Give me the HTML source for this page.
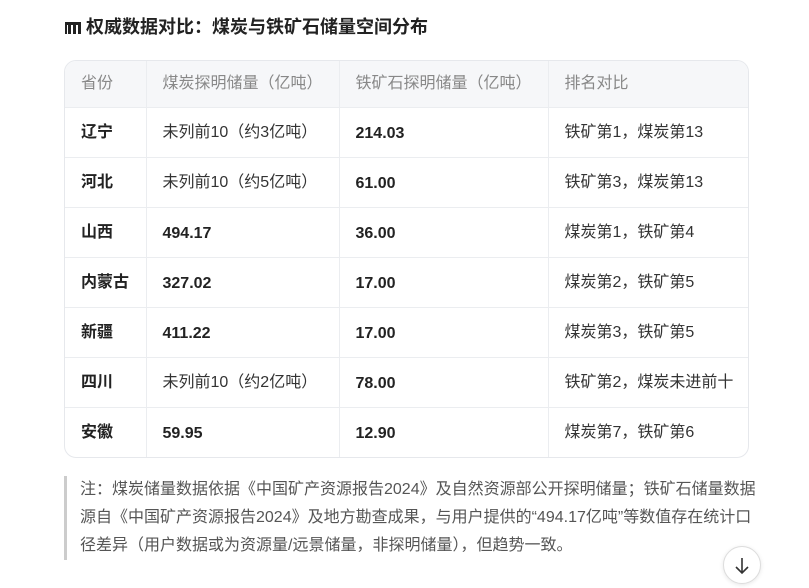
<!DOCTYPE html>
<html><head><meta charset="utf-8"><style>
body{margin:0;background:#fff;font-family:"Liberation Sans","Noto Sans CJK SC",sans-serif;color:#222;width:809px;height:574px;overflow:hidden;position:relative}
h3{position:absolute;left:64px;top:13px;margin:0;font-size:18px;font-weight:bold;color:#222;line-height:28px;display:flex;align-items:center}
.tbl{position:absolute;left:64px;top:60px;width:683px;border:1px solid #e6e8ec;border-radius:12px;overflow:hidden}
table{border-collapse:collapse;width:100%;font-size:16px;table-layout:fixed}
td,th{border-right:1px solid #ebedf0;border-bottom:1px solid #ebedf0;padding:0 0 0 16px;text-align:left;height:49px;white-space:nowrap;line-height:22px}
th{background:#f6f7f9;font-weight:normal;color:#888;height:46px}
tr:last-child td{border-bottom:none}
td:last-child,th:last-child{border-right:none}
td.b{font-weight:bold;color:#222}
td.n{padding-top:3px;height:46px}
td{color:#333}
.note{position:absolute;left:64px;top:476px;width:690px;border-left:3px solid #ccc;padding-left:13px;font-size:16px;line-height:28px;color:#555;white-space:nowrap}
.btn{position:absolute;left:723px;top:546px;width:36px;height:36px;border:1px solid #ddd;border-radius:50%;background:#fff;box-shadow:0 1px 4px rgba(0,0,0,.1)}
</style></head><body>
<h3><svg width="18" height="16" viewBox="0 0 18 16" style="margin-right:4px"><path d="M1 3h16v12h-3V6h-2v9H9V6H7v9H4V6H3v9H1z" fill="#222"/></svg>权威数据对比：煤炭与铁矿石储量空间分布</h3>
<div class="tbl"><table>
<colgroup><col style="width:81px"><col style="width:193px"><col style="width:209px"><col></colgroup>
<tr><th>省份</th><th>煤炭探明储量（亿吨）</th><th>铁矿石探明储量（亿吨）</th><th>排名对比</th></tr>
<tr><td class="b">辽宁</td><td>未列前10（约3亿吨）</td><td class="b n">214.03</td><td>铁矿第1，煤炭第13</td></tr>
<tr><td class="b">河北</td><td>未列前10（约5亿吨）</td><td class="b n">61.00</td><td>铁矿第3，煤炭第13</td></tr>
<tr><td class="b">山西</td><td class="b n">494.17</td><td class="b n">36.00</td><td>煤炭第1，铁矿第4</td></tr>
<tr><td class="b">内蒙古</td><td class="b n">327.02</td><td class="b n">17.00</td><td>煤炭第2，铁矿第5</td></tr>
<tr><td class="b">新疆</td><td class="b n">411.22</td><td class="b n">17.00</td><td>煤炭第3，铁矿第5</td></tr>
<tr><td class="b">四川</td><td>未列前10（约2亿吨）</td><td class="b n">78.00</td><td>铁矿第2，煤炭未进前十</td></tr>
<tr><td class="b">安徽</td><td class="b n">59.95</td><td class="b n">12.90</td><td>煤炭第7，铁矿第6</td></tr>
</table></div>
<div class="note">注：煤炭储量数据依据《中国矿产资源报告2024》及自然资源部公开探明储量；铁矿石储量数据<br>源自《中国矿产资源报告2024》及地方勘查成果，与用户提供的“494.17亿吨”等数值存在统计口<br>径差异（用户数据或为资源量/远景储量，非探明储量），但趋势一致。</div>
<div class="btn"><svg width="36" height="36" viewBox="0 0 36 36"><path d="M18 11v15M12 20l6 6 6-6" stroke="#333" stroke-width="1.6" fill="none"/></svg></div>
</body></html>
